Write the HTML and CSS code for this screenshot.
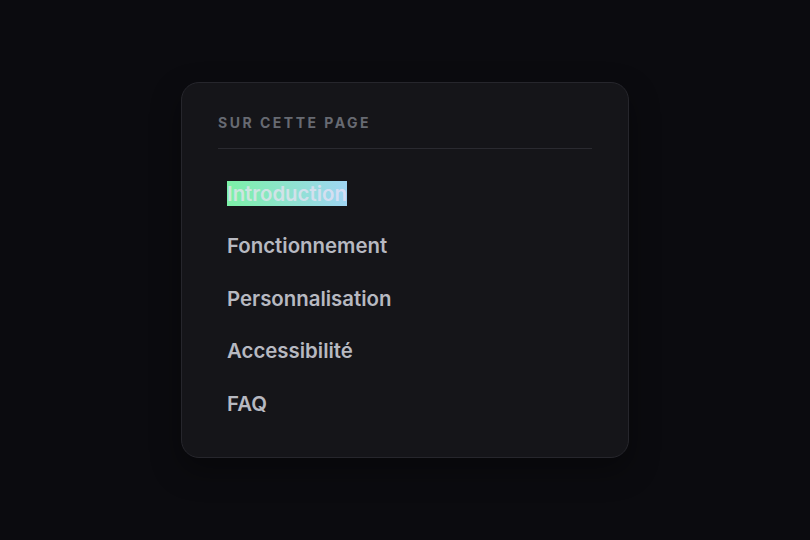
FILE: index.html
```html
<!DOCTYPE html>
<html lang="fr">
<head>
    <meta charset="UTF-8">
    <meta name="viewport" content="width=device-width, initial-scale=1.0">
    <title>Sur cette page</title>
    <link rel="stylesheet" href="styles.css">
</head>
<body>
    <nav class="toc">
        <h2 class="toc-title">Sur cette page</h2>
        <ul class="toc-list">
            <li><a href="#introduction" class="toc-link active"><span>Introduction</span></a></li>
            <li><a href="#fonctionnement" class="toc-link"><span>Fonctionnement</span></a></li>
            <li><a href="#personnalisation" class="toc-link"><span>Personnalisation</span></a></li>
            <li><a href="#accessibilite" class="toc-link"><span>Accessibilité</span></a></li>
            <li><a href="#faq" class="toc-link"><span>FAQ</span></a></li>
        </ul>
    </nav>
</body>
</html>
```

FILE: styles.css
```css
body {
    font-family: Inter, "Noto Sans", sans-serif;
    background: #0b0b0f;
    margin: 0;
    padding: 0;
    min-height: 100vh;
    display: flex;
    align-items: center;
    justify-content: center;
}
.toc {
    width: 448px;
    box-sizing: border-box;
    background: #151519;
    border: 1px solid #26262c;
    border-radius: 18px;
    padding: 31px 36px 27px;
    box-shadow: 0 12px 30px rgba(0,0,0,0.35);
}
.toc-title {
    margin: 0;
    font-size: 14px;
    font-weight: 700;
    letter-spacing: 2.5px;
    text-transform: uppercase;
    color: #676a72;
    padding-bottom: 17px;
    border-bottom: 1px solid #2a2a30;
}
.toc-list {
    list-style: none;
    margin: 19px 0 0;
    padding: 0;
}
.toc-link {
    display: block;
    padding: 14px 9px;
    line-height: 24.5px;
    font-size: 20.4px;
    font-weight: 600;
    color: #b7b9c1;
    text-decoration: none;
}
.toc-link.active span {
    background: linear-gradient(90deg, #7cf1a7 0%, #9fd5f3 100%);
    color: rgba(240, 226, 246, 0.7);
}
```
